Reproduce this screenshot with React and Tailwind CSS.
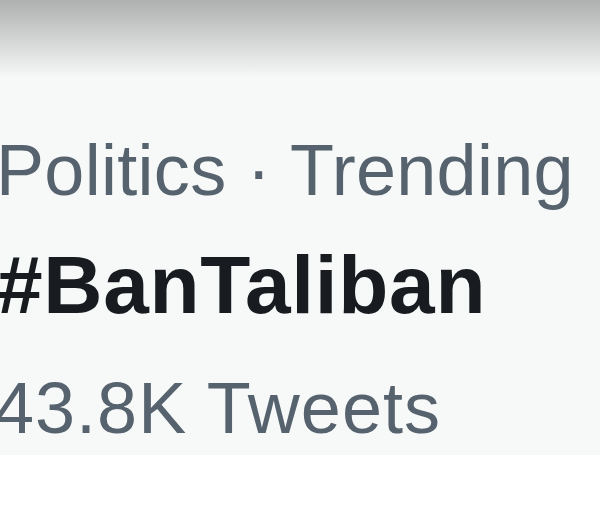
/** Zoomed crop of a single trending row. */
export default function App() {
  return (
    <div className="w-[600px] h-[510px] bg-white overflow-hidden" style={{ fontFamily: '"Liberation Sans", Arial, sans-serif' }}>
      <div className="h-[455px] bg-[#f7f9f9] flex flex-col">
        <div className="h-[78px] bg-linear-to-b from-[#afb1b0] to-[#f7f9f9]" />
        <div className="pt-[42px] flex flex-col whitespace-nowrap">
          <div className="ml-[-4px] text-[72px] leading-[100px] tracking-[0.3px] text-[#56636e]">Politics · Trending</div>
          <div className="ml-[-3px] text-[82px] leading-[130px] tracking-[0.7px] font-bold text-[#181c20]">#BanTaliban</div>
          <div className="ml-[-6px] mt-[11px] text-[72px] leading-[94px] tracking-[1px] text-[#56636e]">43.8K Tweets</div>
        </div>
      </div>
    </div>
  );
}
